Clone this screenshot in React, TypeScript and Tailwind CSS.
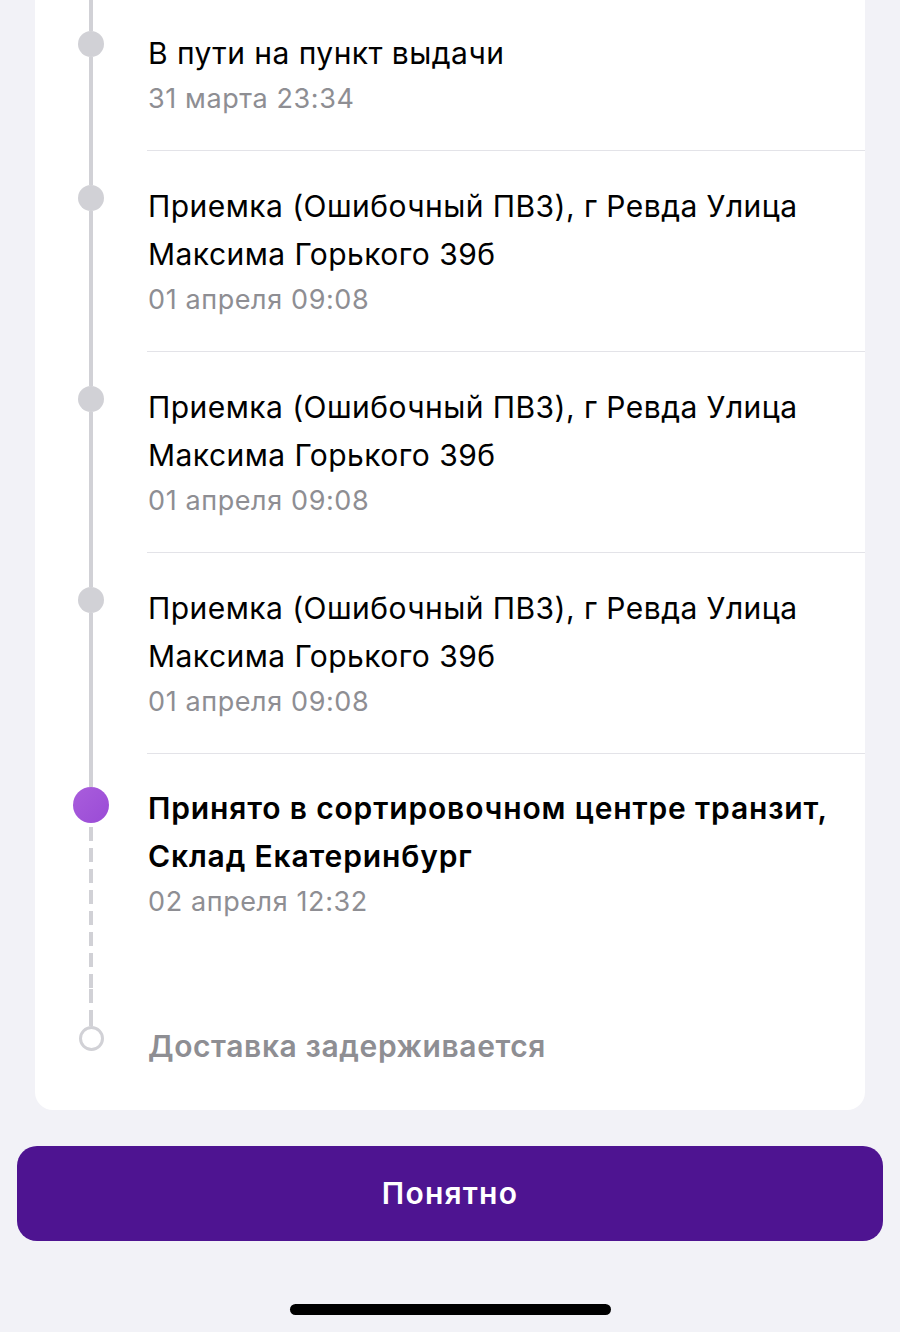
const font = { fontFamily: 'Inter, "Noto Sans", sans-serif' };

type Step = { title: string[]; date: string };

const passed: Step[] = [
  { title: ["В пути на пункт выдачи"], date: "31 марта 23:34" },
  { title: ["Приемка (Ошибочный ПВЗ), г Ревда Улица", "Максима Горького 39б"], date: "01 апреля 09:08" },
  { title: ["Приемка (Ошибочный ПВЗ), г Ревда Улица", "Максима Горького 39б"], date: "01 апреля 09:08" },
  { title: ["Приемка (Ошибочный ПВЗ), г Ревда Улица", "Максима Горького 39б"], date: "01 апреля 09:08" },
];

const dashed =
  "bg-[repeating-linear-gradient(to_bottom,#d1d1d6_0px,#d1d1d6_14px,transparent_14px,transparent_21px)]";

function PassedRow({ step, first }: { step: Step; first: boolean }) {
  return (
    <div className="flex">
      <div className="w-[112px] flex flex-col items-center shrink-0">
        <div className={`w-1 bg-[#d1d1d6] ${first ? "h-[31px]" : "h-[34px]"}`} />
        <div className="w-[26px] h-[26px] rounded-full bg-[#d1d1d6]" />
        <div className="w-1 flex-1 bg-[#d1d1d6]" />
      </div>
      <div className={`flex-1 border-b border-[#e3e3e8] pr-6 pb-[29px] ${first ? "pt-[29px]" : "pt-[31px]"}`}>
        {step.title.map((t, i) => (
          <p key={i} className="pl-px text-[30px] leading-[48px] text-black tracking-[0.45px]">{t}</p>
        ))}
        <p className="pl-px text-[27px] leading-[44px] text-[#8e8e93] tracking-[0.6px]">{step.date}</p>
      </div>
    </div>
  );
}

export default function App() {
  return (
    <div className="w-[900px] h-[1332px] bg-[#f2f2f7] flex flex-col overflow-hidden" style={font}>
      <div className="mx-[35px] bg-white rounded-b-[18px]">
        {passed.map((s, i) => (
          <PassedRow key={i} step={s} first={i === 0} />
        ))}

        {/* current step */}
        <div className="flex">
          <div className="w-[112px] flex flex-col items-center shrink-0">
            <div className="w-1 h-[33px] bg-[#d1d1d6]" />
            <div className="w-9 h-9 rounded-full bg-gradient-to-br from-[#a95ddc] to-[#9a4bd6]" />
            <div className={`w-1 flex-1 mt-[4px] ${dashed}`} />
          </div>
          <div className="flex-1 pr-6 pt-[30px] pb-[65px]">
            <p className="pl-px text-[30px] leading-[48px] font-semibold text-black tracking-[0.85px]">
              Принято в сортировочном центре транзит,
            </p>
            <p className="pl-px text-[30px] leading-[48px] font-semibold text-black tracking-[0.85px]">
              Склад Екатеринбург
            </p>
            <p className="pl-px text-[27px] leading-[44px] text-[#8e8e93] tracking-[0.6px]">02 апреля 12:32</p>
          </div>
        </div>

        {/* upcoming */}
        <div className="flex">
          <div className="w-[112px] flex flex-col items-center shrink-0">
            <div className={`w-1 h-[30px] ${dashed}`} />
            <div className="w-1 h-[7px] bg-[#d1d1d6]" />
            <div className="w-[25px] h-[25px] rounded-full border-[3px] border-[#d1d1d6] bg-white" />
          </div>
          <div className="flex-1 pr-6 pt-[33px] pb-[40px]">
            <p className="pl-px text-[30px] leading-[48px] font-semibold text-[#8e8e93] tracking-[0.6px]">
              Доставка задерживается
            </p>
          </div>
        </div>
      </div>

      <div className="px-[17px] mt-[36px]">
        <button className="w-full h-[95px] rounded-[20px] bg-[#4e1491] text-white text-[30px] font-semibold tracking-[1.2px]">
          Понятно
        </button>
      </div>

      <div className="flex justify-center mt-[63px]">
        <div className="w-[321px] h-[11px] rounded-full bg-black" />
      </div>
    </div>
  );
}
